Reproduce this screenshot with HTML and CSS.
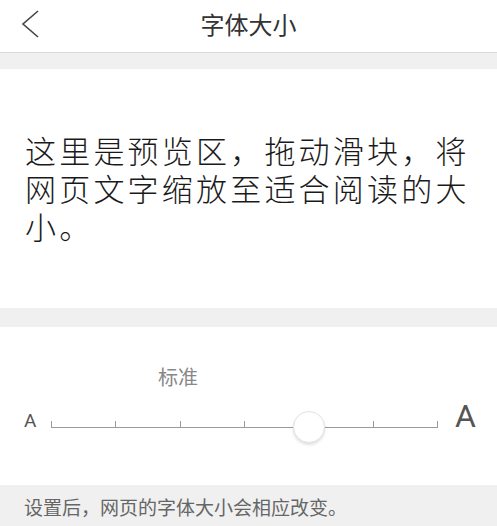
FILE: index.html
```html
<!DOCTYPE html>
<html lang="zh">
<head>
<meta charset="utf-8">
<title>字体大小</title>
<link rel="stylesheet" href="styles.css">
</head>
<body>
<header class="nav">
  <svg class="back" width="20" height="30" viewBox="0 0 20 30"><polyline points="17,2 2,15 17,28" fill="none" stroke="#444" stroke-width="1.6" stroke-linejoin="miter"/></svg>
  <h1 class="title">字体大小</h1>
</header>
<div class="gap gap-top"></div>
<section class="preview">
  <p class="preview-text">这里是预览区，拖动滑块，将网页文字缩放至适合阅读的大小。</p>
</section>
<div class="gap gap-mid"></div>
<section class="slider">
  <div class="label-row"><span class="label">标准</span></div>
  <div class="track-row">
    <span class="a-small">A</span>
    <div class="track">
      <span class="seg"></span><span class="seg"></span><span class="seg"></span><span class="seg"></span><span class="seg"></span><span class="seg last"></span>
      <span class="thumb"></span>
    </div>
    <span class="a-big">A</span>
  </div>
</section>
<footer class="note">设置后，网页的字体大小会相应改变。</footer>
</body>
</html>
```
FILE: styles.css
```css
html, body {
  margin: 0;
  padding: 0;
  background: #fff;
  font-family: "Noto Sans CJK SC", "Noto Sans", sans-serif;
  width: 497px;
  height: 526px;
  overflow: hidden;
}
.nav {
  height: 53px;
  border-bottom: 1px solid #d9d9d9;
  display: flex;
  align-items: center;
  justify-content: center;
  position: relative;
  box-sizing: border-box;
}
.back {
  position: absolute;
  left: 21px;
  top: 9px;
}
.title {
  margin: 0 0 4px 0;
  font-size: 24px;
  font-weight: 400;
  color: #333;
  line-height: 1;
}
.gap {
  background: #f0f0f0;
}
.gap-top { height: 16px; }
.gap-mid { height: 19px; }
.preview {
  height: 239px;
  box-sizing: border-box;
  padding: 62px 10px 0 25px;
}
.preview-text {
  margin: 0;
  font-size: 31px;
  font-weight: 300;
  letter-spacing: 3.2px;
  line-height: 38px;
  color: #1a1a1a;
}
.slider {
  height: 158px;
  box-sizing: border-box;
  padding-top: 38px;
}
.label-row {
  padding-left: 158px;
  height: 24px;
}
.label {
  font-size: 20px;
  line-height: 24px;
  color: #888;
}
.track-row {
  display: flex;
  align-items: baseline;
  padding-left: 24px;
  margin-top: 11px;
}
.a-small {
  font-family: "Roboto", "Noto Sans", sans-serif;
  font-size: 19px;
  color: #555;
  width: 27px;
  line-height: 1;
}
.a-big {
  font-family: "Roboto", "Noto Sans", sans-serif;
  font-size: 32px;
  color: #555;
  margin-left: 17px;
  line-height: 1;
}
.track {
  width: 387px;
  height: 6px;
  display: flex;
  position: relative;
  border-bottom: 1.5px solid #9a9a9a;
}
.seg {
  flex: 1;
  border-left: 1.5px solid #9a9a9a;
}
.seg.last {
  border-right: 1.5px solid #9a9a9a;
}
.thumb {
  position: absolute;
  left: 242px;
  top: -10px;
  width: 32px;
  height: 32px;
  box-sizing: border-box;
  border-radius: 50%;
  background: #fff;
  border: 1px solid #e2e2e2;
  box-shadow: 0 2px 3px rgba(0,0,0,0.12);
}
.note {
  height: 41px;
  background: #f0f0f0;
  box-sizing: border-box;
  padding: 10px 0 0 24px;
  font-size: 19px;
  line-height: 24px;
  color: #666;
}
```
